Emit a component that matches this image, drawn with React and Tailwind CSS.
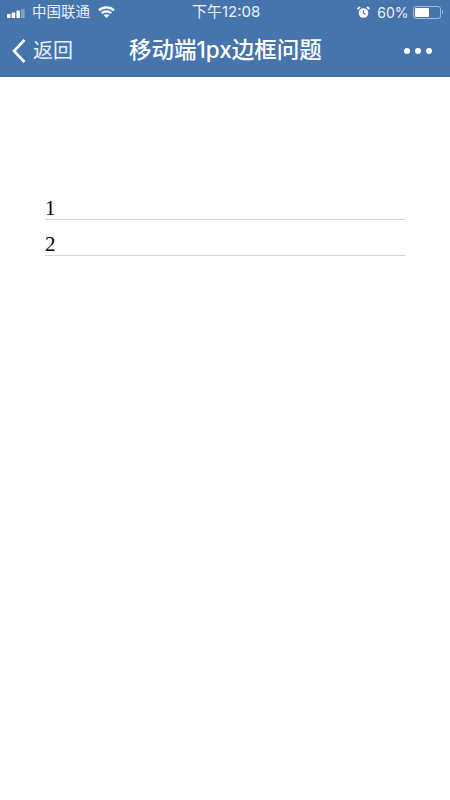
function SignalBars() {
  return (
    <svg width="19" height="9" viewBox="0 0 19 9" fill="none" className="mt-[2px]">
      <rect x="0" y="5" width="3.5" height="4" rx="0.6" fill="#fff" />
      <rect x="4.7" y="3.5" width="3.5" height="5.5" rx="0.6" fill="#fff" />
      <rect x="9.4" y="1.5" width="3.5" height="7.5" rx="0.6" fill="#fff" />
      <rect x="14.1" y="0" width="3.5" height="9" rx="0.6" fill="#fff" fillOpacity="0.35" />
    </svg>
  );
}

function Wifi() {
  return (
    <svg width="17" height="12" viewBox="0 0 17 12" fill="none">
      <path d="M1 4.4C5.2 0.4 11.8 0.4 16 4.4" stroke="#fff" strokeWidth="2.2" />
      <path d="M3.7 7.1C6.4 4.7 10.6 4.7 13.3 7.1" stroke="#fff" strokeWidth="2.2" />
      <path d="M8.5 12L5.6 9.2C7.2 7.9 9.8 7.9 11.4 9.2Z" fill="#fff" />
    </svg>
  );
}

function Alarm() {
  return (
    <svg width="13" height="13" viewBox="0 0 13 13" fill="none">
      <circle cx="6.5" cy="7" r="4.8" fill="#fff" />
      <path d="M6.5 4.2V7.2L8.5 8.2" stroke="#4674ad" strokeWidth="1.1" />
      <path d="M0.6 3.2L3 0.9" stroke="#fff" strokeWidth="1.8" />
      <path d="M12.4 3.2L10 0.9" stroke="#fff" strokeWidth="1.8" />
    </svg>
  );
}

function Battery() {
  return (
    <div className="flex items-center gap-[1px]">
      <div className="w-[28px] h-[13px] rounded-[3px] border border-white/50 p-[1px]">
        <div className="w-[62%] h-full bg-white rounded-[1px]" />
      </div>
      <div className="w-[1.5px] h-[4px] bg-white/50 rounded-r-sm" />
    </div>
  );
}

function StatusBar() {
  return (
    <div className="h-[24px] flex items-center justify-between pl-[7px] pr-[7px] text-[14px] text-white/90 relative">
      <div className="flex items-center">
        <SignalBars />
        <span className="ml-[6px] text-[14.5px]">中国联通</span>
        <span className="ml-[8px]"><Wifi /></span>
      </div>
      <span className="absolute left-[192px] top-[3px] leading-[18px] text-[15px]">下午12:08</span>
      <div className="flex items-center">
        <Alarm />
        <span className="ml-[7px] mr-[4px]">60%</span>
        <Battery />
      </div>
    </div>
  );
}

function NavBar() {
  return (
    <div className="h-[53px] flex items-center justify-between relative text-white">
      <div className="flex items-center pl-[11px]">
        <svg width="16" height="26" viewBox="0 0 16 26" fill="none">
          <path d="M13.5 2L3 13L13.5 24" stroke="#fff" strokeWidth="2.6" />
        </svg>
        <span className="ml-[6px] text-[20px] text-white/90">返回</span>
      </div>
      <div className="absolute left-[129px] top-[11px] text-[22.5px] leading-[29px] font-medium whitespace-nowrap">移动端1px边框问题</div>
      <div className="flex items-center gap-[5px] pr-[18px]">
        <div className="w-[6px] h-[6px] rounded-full bg-white" />
        <div className="w-[6px] h-[6px] rounded-full bg-white" />
        <div className="w-[6px] h-[6px] rounded-full bg-white" />
      </div>
    </div>
  );
}

export default function App() {
  return (
    <div
      className="w-[450px] h-[800px] bg-white overflow-hidden"
      style={{ fontFamily: '"Inter", "Noto Sans CJK SC", sans-serif' }}
    >
      <div className="bg-[#4674ad] h-[77px]">
        <StatusBar />
        <NavBar />
      </div>
      <div className="pt-[107px] px-[45px]" style={{ fontFamily: '"Liberation Serif", serif' }}>
        {[1, 2].map((n) => (
          <div key={n} className="h-[36px] pt-[12px] text-[21px] leading-[24px] text-black border-b border-[#d6d6d6]">
            {n}
          </div>
        ))}
      </div>
    </div>
  );
}
